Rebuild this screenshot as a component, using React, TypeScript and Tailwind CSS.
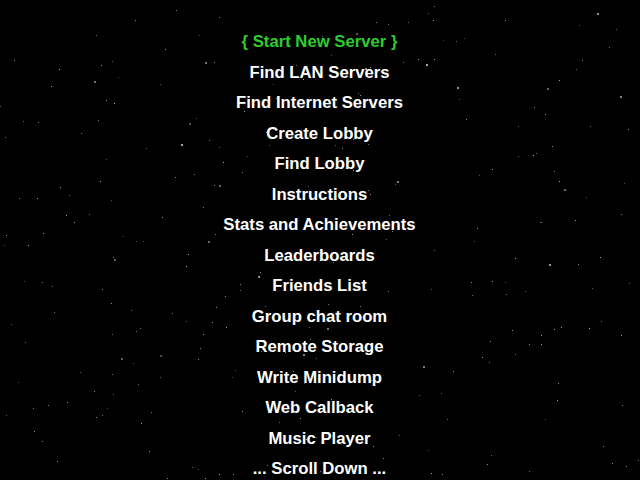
const items = [
  "{ Start New Server }",
  "Find LAN Servers",
  "Find Internet Servers",
  "Create Lobby",
  "Find Lobby",
  "Instructions",
  "Stats and Achievements",
  "Leaderboards",
  "Friends List",
  "Group chat room",
  "Remote Storage",
  "Write Minidump",
  "Web Callback",
  "Music Player",
  "... Scroll Down ...",
];

// small seeded generator so the star field is the same on every load
function makeStars(count: number, seed: number) {
  let s = seed;
  const rand = () => {
    s = (s * 16807) % 2147483647;
    return (s - 1) / 2147483646;
  };
  return Array.from({ length: count }, () => ({
    x: Math.floor(rand() * 640),
    y: Math.floor(rand() * 480),
    size: rand() > 0.9 ? 2 : 1,
    shade: Math.floor(70 + rand() * 100),
  }));
}

const stars = makeStars(280, 1337);

export default function App() {
  return (
    <div className="relative w-[640px] h-[480px] overflow-hidden bg-black">
      <svg className="absolute inset-0" width="640" height="480" aria-hidden>
        {stars.map((st, i) => (
          <rect
            key={i}
            x={st.x}
            y={st.y}
            width={st.size}
            height={st.size}
            fill={`rgb(${st.shade},${st.shade},${st.shade})`}
          />
        ))}
      </svg>

      <ul className="relative flex flex-col items-center pt-[27px] pr-px font-['Liberation_Sans',Arial,sans-serif] font-bold text-[16.7px] leading-[30.5px]">
        {items.map((label, i) => (
          <li key={label} className={i === 0 ? "text-[#2fcc2f]" : "text-white"}>
            {label}
          </li>
        ))}
      </ul>
    </div>
  );
}
